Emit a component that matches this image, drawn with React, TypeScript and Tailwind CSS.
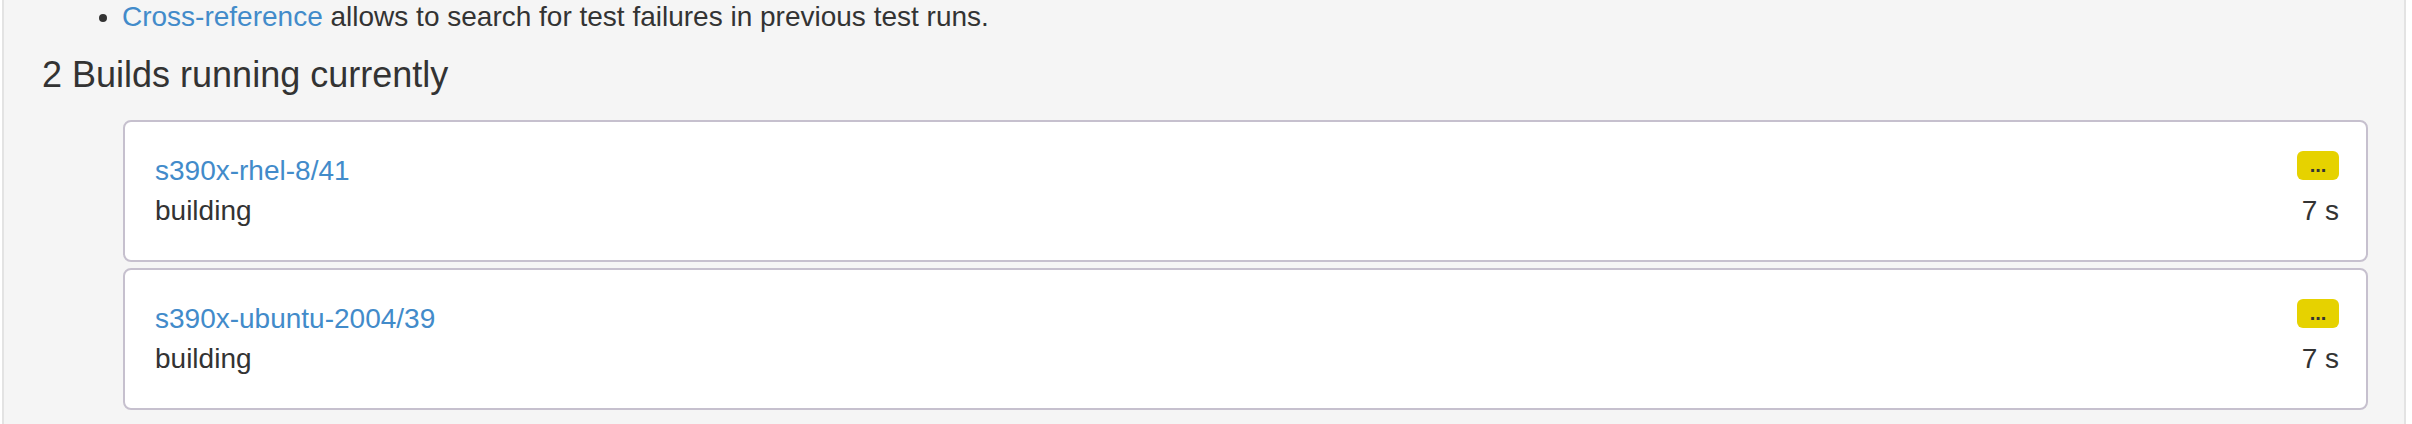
const BUILDS = [
  { name: "s390x-rhel-8/41", state: "building", duration: "7 s" },
  { name: "s390x-ubuntu-2004/39", state: "building", duration: "7 s" },
];

function BuildCard({ name, state, duration }: { name: string; state: string; duration: string }) {
  return (
    <div className="flex h-[142px] items-start justify-between rounded-[8px] border-2 border-[#c6c0ce] bg-white pl-[30px] pr-[27px] pt-[29px]">
      <div className="leading-[40px]">
        <a href="#" className="block text-[#428bca] hover:underline">
          {name}
        </a>
        <div>{state}</div>
      </div>
      <div className="flex flex-col items-end">
        <span className="mb-[11px] flex h-[29px] w-[42px] items-center justify-center rounded-[6px] bg-[#e6d200] text-[20px] font-bold leading-[29px] text-[#333]">
          ...
        </span>
        <span className="leading-[40px]">{duration}</span>
      </div>
    </div>
  );
}

export default function App() {
  return (
    <div className="h-[424px] overflow-hidden bg-white pl-[2px] pr-[6px] font-['Liberation_Sans',Arial,sans-serif] text-[28px] text-[#333]">
      <div className="h-[440px] border-x-2 border-[#e3e3e3] bg-[#f5f5f5] pl-[38px] pr-[36px]">
        <ul className="-mt-[3px] list-disc pl-[80px] leading-[40px]">
          <li>
            <a href="#" className="text-[#428bca] hover:underline">
              Cross-reference
            </a>{" "}
            allows to search for test failures in previous test runs.
          </li>
        </ul>
        <h4 className="mt-[18px] mb-[25px] text-[36px] font-normal leading-[40px]">2 Builds running currently</h4>
        <div className="ml-[81px] flex flex-col gap-[6px]">
          {BUILDS.map((build) => (
            <BuildCard key={build.name} {...build} />
          ))}
        </div>
      </div>
    </div>
  );
}
